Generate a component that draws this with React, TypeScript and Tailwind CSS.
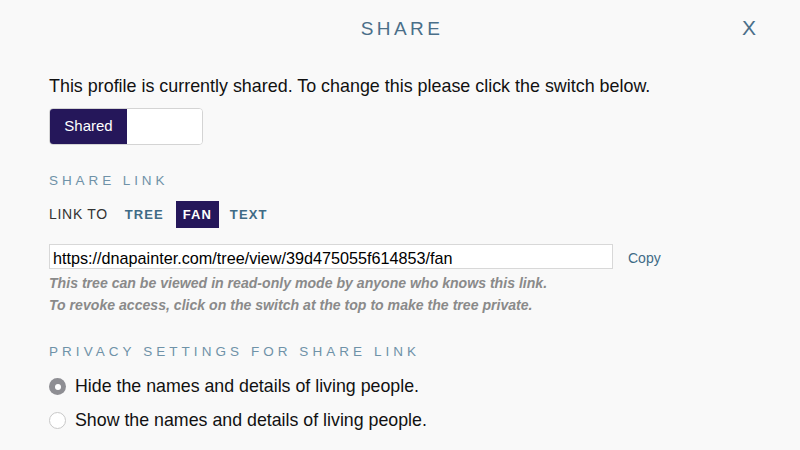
export default function App() {
  const heading = "text-[13.5px] text-[#6f92a8] leading-[18px]"
  return (
    <div className="w-[800px] h-[450px] bg-[#f9f9f9] font-['Liberation_Sans',Arial,sans-serif] text-[#111] overflow-hidden">
      <div className="relative h-[58px] flex items-center justify-center">
        <h1 className="text-[19px] tracking-[0.18em] text-[#4a6f89] pl-[4px]">SHARE</h1>
        <button className="absolute right-[44px] top-[12px] text-[21px] text-[#4a6f89]">X</button>
      </div>

      <div className="px-[49px]">
        <p className="text-[17.9px] leading-[24px] mt-[16px]">
          This profile is currently shared. To change this please click the switch below.
        </p>

        <div className="mt-[10px] flex w-[154px] h-[37px] rounded-[4px] border border-[#d4d4d4] overflow-hidden bg-white">
          <div className="w-[77px] bg-[#25175a] text-white text-[15px] flex items-center justify-center">Shared</div>
          <div className="flex-1 bg-white" />
        </div>

        <div className={heading + " mt-[27px] tracking-[0.29em]"}>SHARE LINK</div>

        <div className="mt-[11px] flex items-center h-[27px] text-[13px]">
          <span className="text-[#333] text-[14px] tracking-[0.05em] mr-[17px]">LINK TO</span>
          <span className="font-bold text-[#3f6b86] tracking-[0.08em] mr-[12px]">TREE</span>
          <span className="font-bold text-white bg-[#25175a] tracking-[0.08em] h-[27px] px-[7px] flex items-center mr-[11px]">FAN</span>
          <span className="font-bold text-[#3f6b86] tracking-[0.09em]">TEXT</span>
        </div>

        <div className="mt-[16px] flex items-center">
          <div className="w-[564px] h-[25px] bg-white border border-[#d8d8d8] px-[3px] pt-[3px] leading-[20px] text-[16.2px] text-black">
            https://dnapainter.com/tree/view/39d475055f614853/fan
          </div>
          <button className="ml-[15px] mt-[3px] text-[14px] text-[#3f6b86]">Copy</button>
        </div>

        <div className="mt-[3px] text-[14.1px] italic font-bold text-[#8a8a8a] leading-[22px]">
          <p>This tree can be viewed in read-only mode by anyone who knows this link.</p>
          <p>To revoke access, click on the switch at the top to make the tree private.</p>
        </div>

        <div className={heading + " mt-[27px] tracking-[0.3em]"}>PRIVACY SETTINGS FOR SHARE LINK</div>

        <div className="mt-[14px] flex flex-col gap-[11px] text-[17.8px]">
          <label className="flex items-center gap-[9px] h-[23px]">
            <span className="w-[17px] h-[17px] rounded-full bg-[#8e8e93] flex items-center justify-center">
              <span className="w-[6px] h-[6px] rounded-full bg-white" />
            </span>
            Hide the names and details of living people.
          </label>
          <label className="flex items-center gap-[9px] h-[23px]">
            <span className="w-[17px] h-[17px] rounded-full bg-white border border-[#c8c8c8]" />
            Show the names and details of living people.
          </label>
        </div>
      </div>
    </div>
  )
}
